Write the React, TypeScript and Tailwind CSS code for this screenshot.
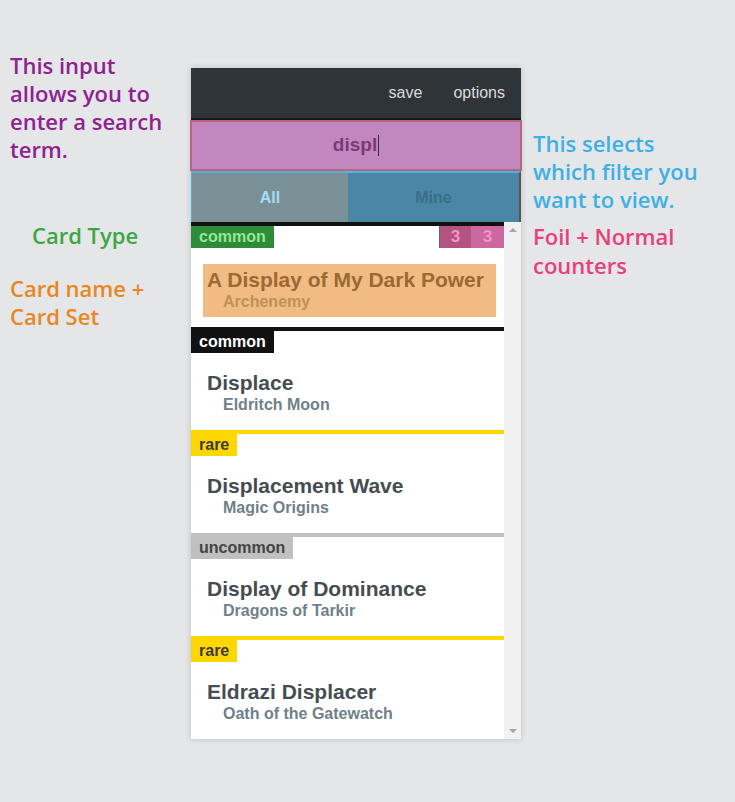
import React from "react";

type Card = {
  name: string;
  set: string;
  rarity: string;
  border: string;
  tagBg: string;
  tagText: string;
  highlight?: boolean;
  counters?: boolean;
};

const cards: Card[] = [
  { name: "A Display of My Dark Power", set: "Archenemy", rarity: "common", border: "border-[#111111]", tagBg: "bg-[#2e8b3a]", tagText: "text-[#93ea93]", highlight: true, counters: true },
  { name: "Displace", set: "Eldritch Moon", rarity: "common", border: "border-[#111111]", tagBg: "bg-[#111111]", tagText: "text-white" },
  { name: "Displacement Wave", set: "Magic Origins", rarity: "rare", border: "border-[#ffd700]", tagBg: "bg-[#ffd700]", tagText: "text-[#3b3b3b]" },
  { name: "Display of Dominance", set: "Dragons of Tarkir", rarity: "uncommon", border: "border-[#c0c0c0]", tagBg: "bg-[#c0c0c0]", tagText: "text-[#444444]" },
  { name: "Eldrazi Displacer", set: "Oath of the Gatewatch", rarity: "rare", border: "border-[#ffd700]", tagBg: "bg-[#ffd700]", tagText: "text-[#3b3b3b]" },
];

function CardRow({ c }: { c: Card }) {
  return (
    <div className={`border-t-4 ${c.border} bg-white`}>
      <div className="flex h-[22px] items-stretch justify-between">
        <div className={`${c.tagBg} ${c.tagText} px-[8px] text-[16px] font-bold leading-[22px]`}>{c.rarity}</div>
        {c.counters && (
          <div className="flex">
            <div className="flex w-[32px] items-center justify-center border-l border-[#666] bg-[#b2547f] text-[17px] font-bold text-[#f592c6]">3</div>
            <div className="flex w-[33px] items-center justify-center bg-[#cc67a0] text-[17px] font-bold text-[#f592c6]">3</div>
          </div>
        )}
      </div>
      <div
        className={`ml-[12px] mr-[8px] mt-[16px] mb-[10px] pl-[4px] pb-[5px] ${
          c.highlight ? "bg-[#f1bc83] pt-[4px]" : "pt-[2px]"
        }`}
      >
        <div className={`text-[21px] font-bold leading-[24px] ${c.highlight ? "text-[#9c6935]" : "text-[#464d50]"}`}>{c.name}</div>
        <div className={`pl-[16px] text-[16px] font-bold leading-[20px] ${c.highlight ? "text-[#c38f58]" : "text-[#708089]"}`}>{c.set}</div>
      </div>
    </div>
  );
}

export default function App() {
  return (
    <div
      className="flex min-h-[802px] w-[735px] bg-[#e5e6e8]"
      style={{ fontFamily: "'Liberation Sans', Arial, sans-serif" }}
    >
      <div
        className="w-[191px] shrink-0 pl-[10px] pt-[51px] text-[22px] font-semibold leading-[28px]"
        style={{ fontFamily: "'Open Sans', 'Noto Sans', sans-serif" }}
      >
        <div className="text-[#8e2290]">
          This input
          <br />
          allows you to
          <br />
          enter a search
          <br />
          term.
        </div>
        <div className="ml-[22px] mt-[58px] text-[#3aa845]">Card Type</div>
        <div className="mt-[25px] text-[#e8871f]">
          Card name +
          <br />
          Card Set
        </div>
      </div>

      <div className="mt-[68px] flex h-[671px] w-[330px] shrink-0 flex-col bg-white shadow-[0_0_6px_rgba(0,0,0,0.18)]">
        <div className="flex h-[50px] items-center justify-end bg-[#2e3437] pr-[16px] text-[16px] text-[#dcdcdc]">
          <span className="mr-[31px]">save</span>
          <span>options</span>
        </div>
        <div className="h-[2px] bg-[#151819]" />
        <div className="relative -mx-[1px] flex h-[51px] items-center justify-center border-2 border-[#b9637f] bg-[#c287bf]">
          <span className="text-[19px] font-bold text-[#7a3a78]">displ</span>
          <span className="ml-[1px] h-[21px] w-[1px] bg-[#3a2a3a]" />
        </div>
        <div className="flex h-[51px] border-t-2 border-l border-r-2 border-[#55b0dd] border-r-[#555]">
          <div className="flex w-[156px] items-center justify-center bg-[#7a9097] text-[16px] font-bold text-[#a6dcf5]">All</div>
          <div className="flex flex-1 items-center justify-center bg-[#4a87a6] text-[16px] font-bold text-[#3a6d88]">Mine</div>
        </div>
        <div className="flex min-h-0 flex-1">
          <div className="min-w-0 flex-1 overflow-hidden">
            {cards.map((c) => (
              <CardRow key={c.name} c={c} />
            ))}
          </div>
          <div className="flex w-[17px] flex-col items-center justify-between bg-[#f1f1f1] pb-[6px] pt-[6px]">
            <div className="h-0 w-0 border-x-[4px] border-b-[4px] border-x-transparent border-b-[#a3a3a3]" />
            <div className="h-0 w-0 border-x-[4px] border-t-[4px] border-x-transparent border-t-[#a3a3a3]" />
          </div>
        </div>
      </div>

      <div
        className="pl-[12px] pt-[129px] text-[22px] font-semibold leading-[28px]"
        style={{ fontFamily: "'Open Sans', 'Noto Sans', sans-serif" }}
      >
        <div className="text-[#3fb0e3]">
          This selects
          <br />
          which filter you
          <br />
          want to view.
        </div>
        <div className="mt-[9px] leading-[29px] text-[#e8407c]">
          Foil + Normal
          <br />
          counters
        </div>
      </div>
    </div>
  );
}
